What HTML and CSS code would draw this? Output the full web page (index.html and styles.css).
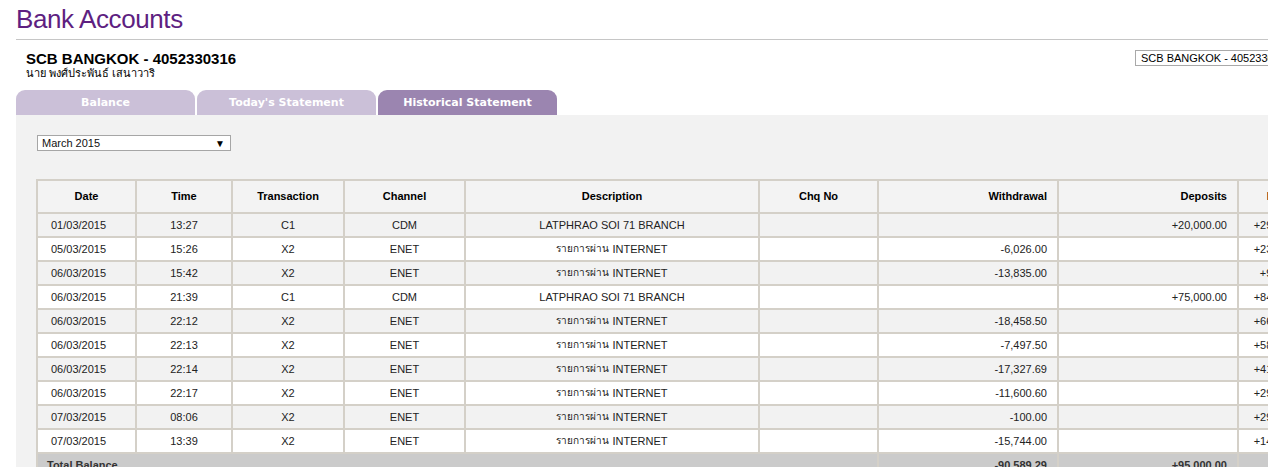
FILE: index.html
```html
<!DOCTYPE html>
<html lang="en">
<head>
<meta charset="utf-8">
<title>Bank Accounts</title>
<link rel="stylesheet" href="styles.css">
</head>
<body>
<div class="page">
  <h1 class="title">Bank Accounts</h1>
  <div class="account-bar">
    <div class="account-info">
      <div class="account-name">SCB BANGKOK - 4052330316</div>
      <div class="owner">นาย พงศ์ประพันธ์ เสนาวาริ</div>
    </div>
    <div class="account-select"><span>SCB BANGKOK - 4052330316</span><span class="arrow">▼</span></div>
  </div>
  <div class="tabs">
    <div class="tab">Balance</div>
    <div class="tab">Today's Statement</div>
    <div class="tab active">Historical Statement</div>
  </div>
  <div class="panel">
    <div class="month-select"><span>March 2015</span><span class="arrow">▼</span></div>
    <table class="statement">
      <colgroup>
        <col class="c-date"><col class="c-time"><col class="c-trans"><col class="c-channel"><col class="c-desc"><col class="c-chq"><col class="c-money"><col class="c-money"><col class="c-bal">
      </colgroup>
      <thead>
        <tr>
          <th>Date</th><th>Time</th><th>Transaction</th><th>Channel</th><th>Description</th><th>Chq No</th><th class="num">Withdrawal</th><th class="num">Deposits</th><th class="num">Balance</th>
        </tr>
      </thead>
      <tbody>
        <tr class="odd"><td class="date">01/03/2015</td><td>13:27</td><td>C1</td><td>CDM</td><td>LATPHRAO SOI 71 BRANCH</td><td></td><td class="num"></td><td class="num">+20,000.00</td><td class="num">+29,634.21</td></tr>
        <tr><td class="date">05/03/2015</td><td>15:26</td><td>X2</td><td>ENET</td><td><span class="th">รายการผ่าน</span> INTERNET</td><td></td><td class="num">-6,026.00</td><td class="num"></td><td class="num">+23,608.21</td></tr>
        <tr class="odd"><td class="date">06/03/2015</td><td>15:42</td><td>X2</td><td>ENET</td><td><span class="th">รายการผ่าน</span> INTERNET</td><td></td><td class="num">-13,835.00</td><td class="num"></td><td class="num">+9,773.21</td></tr>
        <tr><td class="date">06/03/2015</td><td>21:39</td><td>C1</td><td>CDM</td><td>LATPHRAO SOI 71 BRANCH</td><td></td><td class="num"></td><td class="num">+75,000.00</td><td class="num">+84,773.21</td></tr>
        <tr class="odd"><td class="date">06/03/2015</td><td>22:12</td><td>X2</td><td>ENET</td><td><span class="th">รายการผ่าน</span> INTERNET</td><td></td><td class="num">-18,458.50</td><td class="num"></td><td class="num">+66,314.71</td></tr>
        <tr><td class="date">06/03/2015</td><td>22:13</td><td>X2</td><td>ENET</td><td><span class="th">รายการผ่าน</span> INTERNET</td><td></td><td class="num">-7,497.50</td><td class="num"></td><td class="num">+58,817.21</td></tr>
        <tr class="odd"><td class="date">06/03/2015</td><td>22:14</td><td>X2</td><td>ENET</td><td><span class="th">รายการผ่าน</span> INTERNET</td><td></td><td class="num">-17,327.69</td><td class="num"></td><td class="num">+41,489.52</td></tr>
        <tr><td class="date">06/03/2015</td><td>22:17</td><td>X2</td><td>ENET</td><td><span class="th">รายการผ่าน</span> INTERNET</td><td></td><td class="num">-11,600.60</td><td class="num"></td><td class="num">+29,888.92</td></tr>
        <tr class="odd"><td class="date">07/03/2015</td><td>08:06</td><td>X2</td><td>ENET</td><td><span class="th">รายการผ่าน</span> INTERNET</td><td></td><td class="num">-100.00</td><td class="num"></td><td class="num">+29,788.92</td></tr>
        <tr><td class="date">07/03/2015</td><td>13:39</td><td>X2</td><td>ENET</td><td><span class="th">รายการผ่าน</span> INTERNET</td><td></td><td class="num">-15,744.00</td><td class="num"></td><td class="num">+14,044.92</td></tr>
        <tr class="total"><td colspan="6" class="total-label">Total Balance</td><td class="num">-90,589.29</td><td class="num">+95,000.00</td><td class="num"></td></tr>
      </tbody>
    </table>
  </div>
</div>
</body>
</html>
```

FILE: styles.css
```css
html, body {
  overflow: hidden;
}

body {
  margin: 0;
  background: #ffffff;
  font-family: "Liberation Sans", Arial, sans-serif;
  color: #222222;
}

.page {
  width: 1325px;
  margin-left: 16px;
  padding-top: 4px;
}

.title {
  margin: 0;
  padding-bottom: 5px;
  font-size: 26px;
  line-height: 30px;
  font-weight: normal;
  letter-spacing: -0.4px;
  color: #5e1f81;
  border-bottom: 1px solid #c6c6c6;
}

.account-bar {
  display: flex;
  justify-content: space-between;
  align-items: flex-start;
  padding: 10px 26px 0 10px;
}

.account-name {
  font-size: 15px;
  line-height: 17px;
  font-weight: bold;
  color: #000000;
}

.owner {
  font-size: 11px;
  line-height: 13px;
  color: #000000;
}

.account-select {
  display: flex;
  justify-content: space-between;
  align-items: center;
  box-sizing: border-box;
  width: 180px;
  height: 16px;
  padding: 0 5px;
  border: 1px solid #a9a9a9;
  background: #ffffff;
  font-size: 11px;
  color: #000000;
  white-space: nowrap;
}

.arrow {
  font-size: 10px;
  color: #000000;
}

.tabs {
  display: flex;
  gap: 2px;
  margin-top: 10px;
}

.tab {
  width: 179px;
  height: 25px;
  line-height: 25px;
  text-align: center;
  border-radius: 9px 9px 0 0;
  background: #cbc0d8;
  color: #ffffff;
  font-family: "DejaVu Sans", Verdana, sans-serif;
  font-size: 11px;
  font-weight: bold;
}

.tab.active {
  background: #9b85b0;
}

.panel {
  background: #f2f2f2;
  padding: 20px 21px 40px 20px;
}

.month-select {
  display: flex;
  justify-content: space-between;
  align-items: center;
  box-sizing: border-box;
  width: 194px;
  height: 16px;
  margin-left: 1px;
  padding: 0 5px 0 4px;
  border: 1px solid #a6a6a6;
  background: #ffffff;
  font-size: 11px;
  color: #111111;
}

.statement {
  margin-top: 28px;
  border-collapse: collapse;
  table-layout: fixed;
  width: 1283px;
  font-size: 11px;
}

.c-date { width: 99px; }
.c-time { width: 96px; }
.c-trans { width: 112px; }
.c-channel { width: 121px; }
.c-desc { width: 294px; }
.c-chq { width: 119px; }
.c-money { width: 180px; }
.c-bal { width: 82px; }

.statement th,
.statement td {
  border: 2px solid #d4d0c8;
  text-align: center;
  white-space: nowrap;
  overflow: hidden;
  padding: 4px 10px;
  height: 14px;
  line-height: 14px;
}

.statement th {
  padding-top: 8px;
  padding-bottom: 9px;
  background: #f3f3f3;
  color: #000000;
  font-weight: bold;
}

.statement td {
  background: #ffffff;
  color: #222222;
}

.statement tr.odd td {
  background: #f2f2f2;
}

.statement .num {
  text-align: right;
}

.statement td.date {
  text-align: left;
  padding-left: 13px;
}

.statement .th {
  display: inline-block;
  height: 14px;
  line-height: 14px;
  vertical-align: top;
  overflow: visible;
  font-size: 10px;
}

.statement tr.total td {
  background: #cbcbcb;
  font-weight: bold;
  color: #333333;
}

.statement td.total-label {
  text-align: left;
  padding-left: 9px;
}
```
